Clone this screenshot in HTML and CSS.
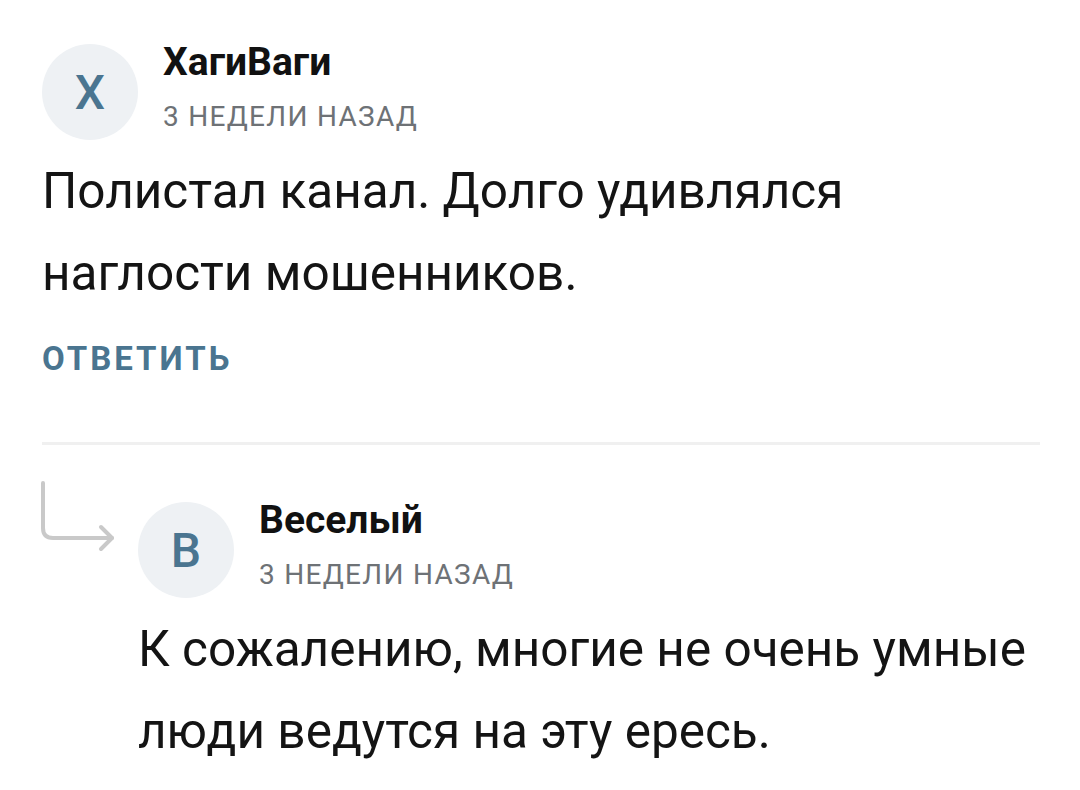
FILE: index.html
```html
<!DOCTYPE html>
<html lang="ru">
<head>
<meta charset="utf-8">
<link rel="stylesheet" href="styles.css">
</head>
<body>
<div class="page">
  <div class="comment">
    <div class="head">
      <div class="avatar">Х</div>
      <div class="who">
        <div class="name">ХагиВаги</div>
        <div class="meta">3 недели назад</div>
      </div>
    </div>
    <p class="text">Полистал канал. Долго удивлялся наглости мошенников.</p>
    <div class="reply-btn">Ответить</div>
  </div>
  <div class="divider"></div>
  <div class="reply">
    <svg class="arrow" width="80" height="80" viewBox="0 0 80 80">
      <path d="M2 2 V47 Q2 57 12 57 H71" fill="none" stroke="#c9c9c9" stroke-width="4" stroke-linecap="round"/>
      <path d="M60 46 L71 57 L60 68" fill="none" stroke="#c9c9c9" stroke-width="4" stroke-linecap="round" stroke-linejoin="round"/>
    </svg>
    <div class="comment sub">
      <div class="head">
        <div class="avatar">В</div>
        <div class="who">
          <div class="name">Веселый</div>
          <div class="meta">3 недели назад</div>
        </div>
      </div>
      <p class="text">К сожалению, многие не очень умные люди ведутся на эту ересь.</p>
    </div>
  </div>
</div>
</body>
</html>
```
FILE: styles.css
```css
html, body {
  margin: 0;
  padding: 0;
  background: #ffffff;
}
.page {
  font-family: Roboto, "Noto Sans", sans-serif;
  padding: 44px 40px 0 42px;
  color: #141414;
}
.head {
  display: flex;
  align-items: flex-start;
  gap: 25px;
}
.avatar {
  width: 96px;
  height: 96px;
  border-radius: 50%;
  background: #eef1f4;
  color: #4a7590;
  font-size: 48px;
  font-weight: 500;
  display: flex;
  align-items: center;
  justify-content: center;
  flex: none;
}
.who {
  margin-top: -5px;
}
.name {
  font-size: 39px;
  font-weight: 700;
  line-height: 46px;
  color: #111;
}
.meta {
  margin-top: 16px;
  font-size: 28px;
  line-height: 32px;
  letter-spacing: 1.3px;
  text-transform: uppercase;
  color: #6e7276;
}
.text {
  margin: 10px 0 0;
  font-size: 49.5px;
  line-height: 82px;
  color: #141414;
  max-width: 960px;
}
.reply-btn {
  margin-top: 25px;
  font-size: 33px;
  font-weight: 700;
  letter-spacing: 3px;
  text-transform: uppercase;
  color: #4a7590;
  line-height: 40px;
}
.divider {
  margin-top: 63px;
  height: 3px;
  background: #f0f0f0;
}
.reply {
  display: flex;
  margin-top: 36px;
}
.arrow {
  flex: none;
  margin-left: -1px;
  width: 80px;
  height: 80px;
}
.sub {
  margin-left: 17px;
  margin-top: 21px;
}
```
